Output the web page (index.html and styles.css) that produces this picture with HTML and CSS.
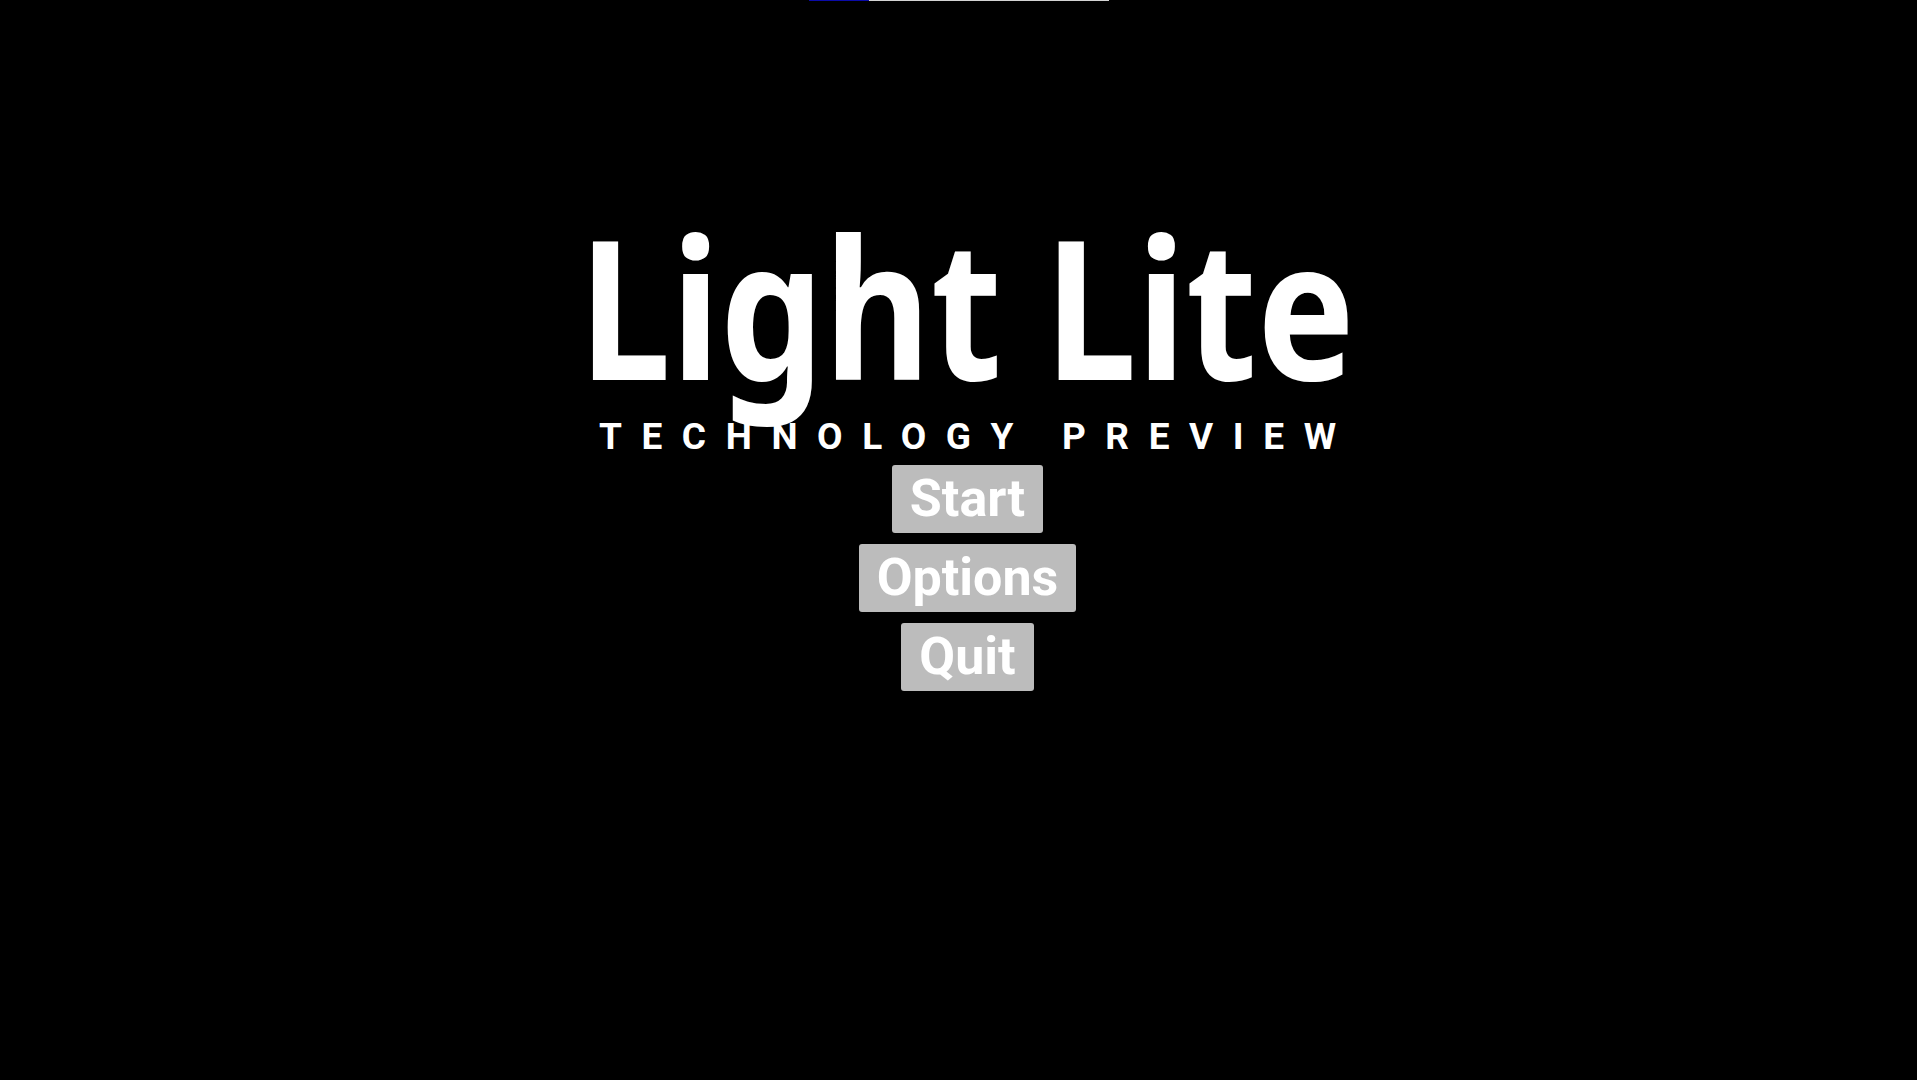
FILE: index.html
```html
<!DOCTYPE html>
<html>
<head>
<meta charset="utf-8">
<link rel="stylesheet" href="styles.css">
</head>
<body>
<div class="loader"><div class="loader-fill" style="width:20%"></div></div>
<main class="menu">
  <h1 class="title">Light Lite</h1>
  <div class="subtitle">TECHNOLOGY PREVIEW</div>
  <nav class="buttons">
    <button class="btn">Start</button>
    <button class="btn">Options</button>
    <button class="btn">Quit</button>
  </nav>
</main>
</body>
</html>
```
FILE: styles.css
```css
html, body {
  margin: 0;
  padding: 0;
  background: #000;
  height: 100%;
}
body {
  font-family: Roboto, "Liberation Sans", sans-serif;
  color: #fff;
}
.loader {
  width: 300px;
  height: 1px;
  margin: 0 auto;
  background: #d4d4d4;
}
.loader-fill {
  height: 100%;
  background: #0b0ba8;
}
.menu {
  display: flex;
  flex-direction: column;
  align-items: center;
  padding-left: 18px;
  padding-top: 204px;
}
.title {
  margin: 0;
  font-family: "Noto Sans", "Liberation Sans", sans-serif;
  font-size: 194px;
  font-weight: 700;
  line-height: 200px;
  letter-spacing: 0;
  transform: scaleX(0.847);
}
.subtitle {
  position: relative;
  margin-top: 10px;
  font-family: Roboto, "Liberation Sans", sans-serif;
  font-size: 37px;
  font-weight: 700;
  letter-spacing: 19.6px;
  line-height: 44px;
  margin-right: -19.6px;
}
.buttons {
  display: flex;
  flex-direction: column;
  align-items: center;
  gap: 11px;
  margin-top: 6px;
}
.btn {
  font-family: Roboto, "Liberation Sans", sans-serif;
  font-size: 52px;
  font-weight: 700;
  color: #fff;
  background: #bcbcbc;
  border: none;
  border-radius: 3px;
  padding: 0 18px;
  height: 68px;
  line-height: 68px;
}
```
